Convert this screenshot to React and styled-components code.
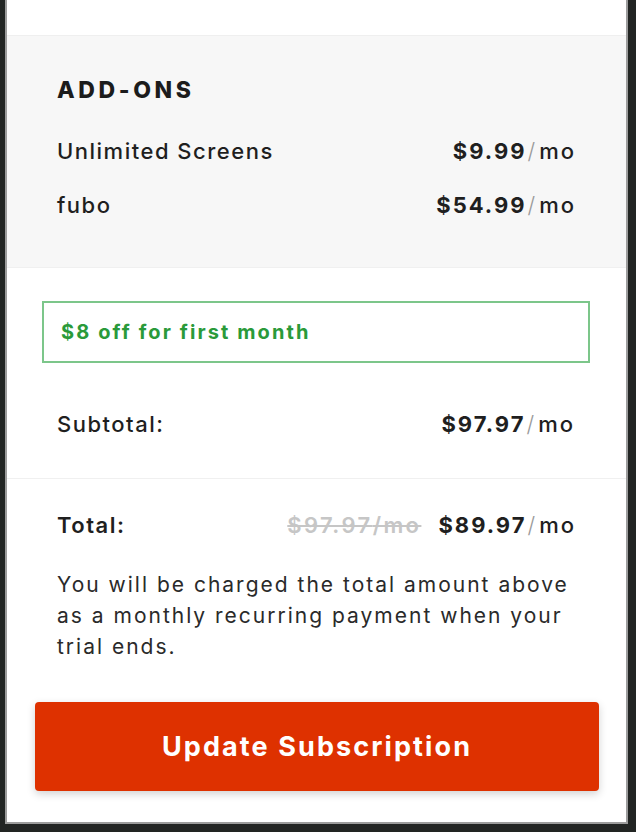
import React from "react";
import styled, { createGlobalStyle } from "styled-components";

const Global = createGlobalStyle`
  html, body { margin: 0; padding: 0; background: #222523; }
  body { font-family: "Inter", "Liberation Sans", sans-serif; color: #1f1f1f; }
`;

const Frame = styled.div`
  width: 636px;
  height: 832px;
  box-sizing: border-box;
  padding: 0 8px 8px 5px;
  background: #222523;
`;

const Card = styled.div`
  box-sizing: border-box;
  height: 824px;
  background: #fff;
  border-left: 2px solid #9c9c9c;
  border-right: 2px solid #9c9c9c;
  border-bottom: 2px solid #9c9c9c;
  display: flex;
  flex-direction: column;
`;

const Stub = styled.div`
  height: 35px;
  border-bottom: 1px solid #efefef;
`;

const AddOns = styled.section`
  background: #f7f7f7;
  height: 232px;
  box-sizing: border-box;
  padding: 41px 50px 0 50px;
  border-bottom: 1px solid #f0f0f0;
`;

const Heading = styled.h2`
  margin: 0;
  font-size: 23px;
  font-weight: 800;
  letter-spacing: 3.6px;
  line-height: 26px;
  color: #1c1c1c;
`;

const Row = styled.div`
  display: flex;
  justify-content: space-between;
  align-items: center;
  height: 26px;
  margin-top: ${(p) => p.$mt || 0}px;
  font-size: 22px;
  font-weight: ${(p) => p.$weight || 500};
  letter-spacing: 1.5px;
  color: #1f1f1f;
`;

const Price = styled.span`
  font-weight: 700;
  letter-spacing: 2px;
  display: flex;
  align-items: center;
  gap: 17px;
`;

const Per = styled.span`
  font-weight: 500;
  & > i { font-style: normal; color: #9a9a9a; font-weight: 300; margin: 0 2px 0 1px; }
`;

const Old = styled.span`
  color: #c6c6c6;
  font-weight: 600;
  letter-spacing: 2.4px;
  text-decoration: line-through;
  text-decoration-color: #c6c6c6;
`;

const PromoSection = styled.section`
  padding: 33px 36px 0 35px;
  height: 211px;
  box-sizing: border-box;
  border-bottom: 1px solid #f0f0f0;
`;

const Promo = styled.div`
  height: 62px;
  box-sizing: border-box;
  border: 2px solid #7cc68a;
  display: flex;
  align-items: center;
  padding-left: 17px;
  font-size: 20px;
  font-weight: 700;
  color: #2a9a3a;
  letter-spacing: 2.1px;
`;

const Inner = styled.div`
  padding: 0 15px;
`;

const TotalSection = styled.section`
  padding: 33px 50px 0 50px;
`;

const Note = styled.p`
  margin: 31px 0 0;
  font-size: 21px;
  line-height: 31px;
  font-weight: 400;
  letter-spacing: 2px;
  color: #2a2a2a;
`;

const ButtonWrap = styled.div`
  padding: 40px 27px 0 28px;
`;

const Button = styled.button`
  width: 100%;
  height: 89px;
  border: none;
  border-radius: 4px;
  background: #de3100;
  color: #fff;
  font-family: inherit;
  font-size: 27px;
  font-weight: 700;
  letter-spacing: 2.1px;
  box-shadow: 0 3px 8px rgba(0,0,0,0.18);
  cursor: pointer;
`;

const Amount = ({ old, value }) => (
  <Price>
    {old && <Old>{old}/mo</Old>}
    <span>
      {value}
      <Per><i>/</i>mo</Per>
    </span>
  </Price>
);

export default function App() {
  return (
    <Frame>
      <Global />
      <Card>
        <Stub />
        <AddOns>
          <Heading>ADD-ONS</Heading>
          <Row $mt={35}>
            <span>Unlimited Screens</span>
            <Amount value="$9.99" />
          </Row>
          <Row $mt={28}>
            <span>fubo</span>
            <Amount value="$54.99" />
          </Row>
        </AddOns>
        <PromoSection>
          <Promo>$8 off for first month</Promo>
          <Inner>
            <Row $mt={48}>
              <span>Subtotal:</span>
              <Amount value="$97.97" />
            </Row>
          </Inner>
        </PromoSection>
        <TotalSection>
          <Row $weight={600}>
            <span>Total:</span>
            <Amount old="$97.97" value="$89.97" />
          </Row>
          <Note>
            You will be charged the total amount above as a monthly recurring payment when your trial ends.
          </Note>
        </TotalSection>
        <ButtonWrap>
          <Button>Update Subscription</Button>
        </ButtonWrap>
      </Card>
    </Frame>
  );
}
